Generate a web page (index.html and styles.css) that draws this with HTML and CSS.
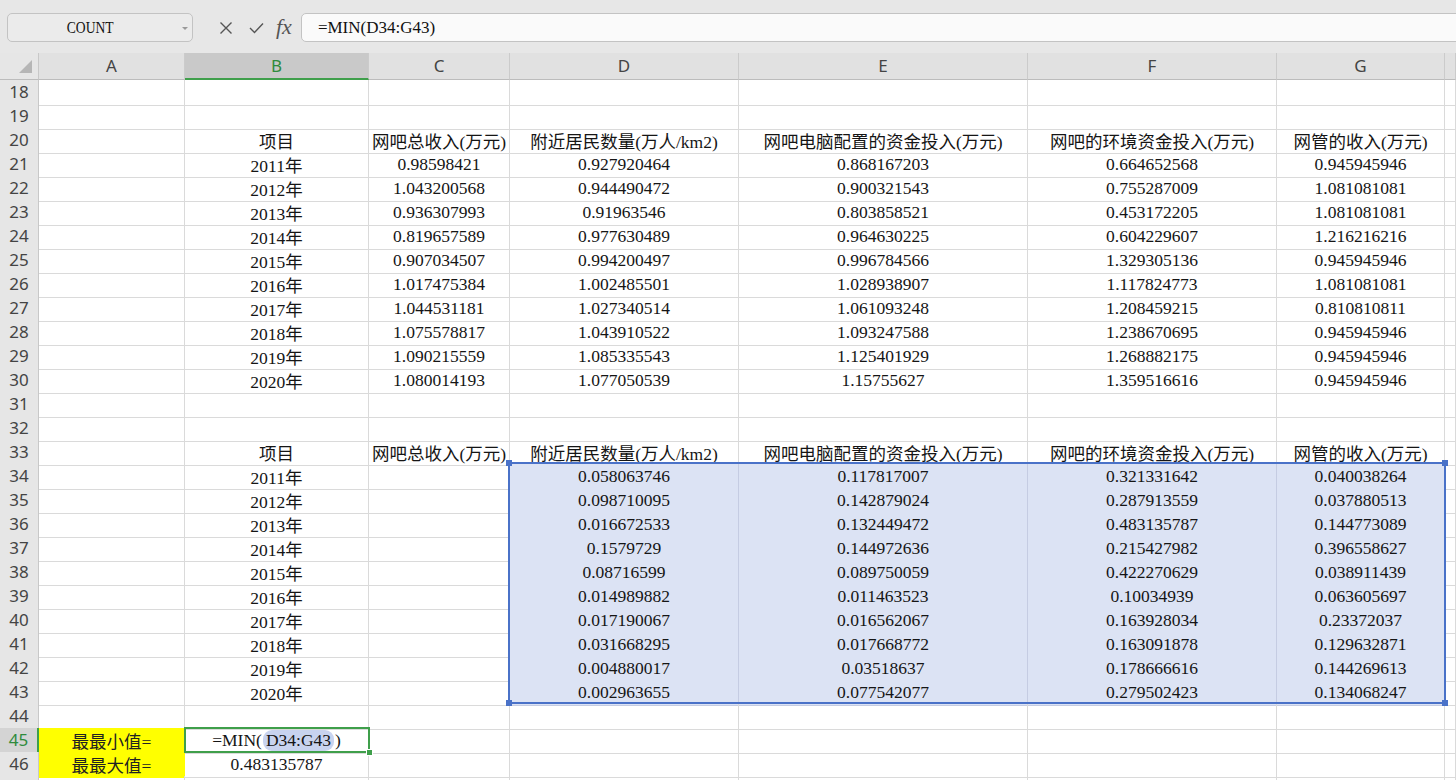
FILE: index.html
```html
<!DOCTYPE html>
<html>
<head>
<meta charset="utf-8">
<link rel="stylesheet" href="styles.css">
</head>
<body>
<div class="toolbar">
  <div class="namebox"><span class="namebox-text">COUNT</span><span class="caret"></span></div>
  <div class="icons">
    <svg class="ic" width="14" height="14" viewBox="0 0 14 14"><path d="M1.5 1.5 L12.5 12.5 M12.5 1.5 L1.5 12.5" stroke="#555" stroke-width="1.4" fill="none"/></svg>
    <svg class="ic ic-check" width="15" height="12" viewBox="0 0 15 12"><path d="M1 6 L5.5 10.5 L14 1.5" stroke="#555" stroke-width="1.4" fill="none"/></svg>
    <span class="fx">fx</span>
  </div>
  <div class="formula">=MIN(D34:G43)</div>
</div>
<div class="sheet">
  <div class="row hdr">
    <div class="c corner"><div class="tri"></div></div>
    <div class="c ch">A</div><div class="c ch act">B</div><div class="c ch">C</div><div class="c ch">D</div><div class="c ch">E</div><div class="c ch">F</div><div class="c ch">G</div><div class="c ch"></div>
  </div>
  <div class="row"><div class="c rh">18</div><div class="c"></div><div class="c"></div><div class="c"></div><div class="c"></div><div class="c"></div><div class="c"></div><div class="c"></div><div class="c"></div></div>
  <div class="row"><div class="c rh">19</div><div class="c"></div><div class="c"></div><div class="c"></div><div class="c"></div><div class="c"></div><div class="c"></div><div class="c"></div><div class="c"></div></div>
  <div class="row"><div class="c rh">20</div><div class="c"></div><div class="c">项目</div><div class="c">网吧总收入(万元)</div><div class="c">附近居民数量(万人/km2)</div><div class="c">网吧电脑配置的资金投入(万元)</div><div class="c">网吧的环境资金投入(万元)</div><div class="c">网管的收入(万元)</div><div class="c"></div></div>
  <div class="row"><div class="c rh">21</div><div class="c"></div><div class="c">2011年</div><div class="c">0.98598421</div><div class="c">0.927920464</div><div class="c">0.868167203</div><div class="c">0.664652568</div><div class="c">0.945945946</div><div class="c"></div></div>
  <div class="row"><div class="c rh">22</div><div class="c"></div><div class="c">2012年</div><div class="c">1.043200568</div><div class="c">0.944490472</div><div class="c">0.900321543</div><div class="c">0.755287009</div><div class="c">1.081081081</div><div class="c"></div></div>
  <div class="row"><div class="c rh">23</div><div class="c"></div><div class="c">2013年</div><div class="c">0.936307993</div><div class="c">0.91963546</div><div class="c">0.803858521</div><div class="c">0.453172205</div><div class="c">1.081081081</div><div class="c"></div></div>
  <div class="row"><div class="c rh">24</div><div class="c"></div><div class="c">2014年</div><div class="c">0.819657589</div><div class="c">0.977630489</div><div class="c">0.964630225</div><div class="c">0.604229607</div><div class="c">1.216216216</div><div class="c"></div></div>
  <div class="row"><div class="c rh">25</div><div class="c"></div><div class="c">2015年</div><div class="c">0.907034507</div><div class="c">0.994200497</div><div class="c">0.996784566</div><div class="c">1.329305136</div><div class="c">0.945945946</div><div class="c"></div></div>
  <div class="row"><div class="c rh">26</div><div class="c"></div><div class="c">2016年</div><div class="c">1.017475384</div><div class="c">1.002485501</div><div class="c">1.028938907</div><div class="c">1.117824773</div><div class="c">1.081081081</div><div class="c"></div></div>
  <div class="row"><div class="c rh">27</div><div class="c"></div><div class="c">2017年</div><div class="c">1.044531181</div><div class="c">1.027340514</div><div class="c">1.061093248</div><div class="c">1.208459215</div><div class="c">0.810810811</div><div class="c"></div></div>
  <div class="row"><div class="c rh">28</div><div class="c"></div><div class="c">2018年</div><div class="c">1.075578817</div><div class="c">1.043910522</div><div class="c">1.093247588</div><div class="c">1.238670695</div><div class="c">0.945945946</div><div class="c"></div></div>
  <div class="row"><div class="c rh">29</div><div class="c"></div><div class="c">2019年</div><div class="c">1.090215559</div><div class="c">1.085335543</div><div class="c">1.125401929</div><div class="c">1.268882175</div><div class="c">0.945945946</div><div class="c"></div></div>
  <div class="row"><div class="c rh">30</div><div class="c"></div><div class="c">2020年</div><div class="c">1.080014193</div><div class="c">1.077050539</div><div class="c">1.15755627</div><div class="c">1.359516616</div><div class="c">0.945945946</div><div class="c"></div></div>
  <div class="row"><div class="c rh">31</div><div class="c"></div><div class="c"></div><div class="c"></div><div class="c"></div><div class="c"></div><div class="c"></div><div class="c"></div><div class="c"></div></div>
  <div class="row"><div class="c rh">32</div><div class="c"></div><div class="c"></div><div class="c"></div><div class="c"></div><div class="c"></div><div class="c"></div><div class="c"></div><div class="c"></div></div>
  <div class="row"><div class="c rh">33</div><div class="c"></div><div class="c">项目</div><div class="c">网吧总收入(万元)</div><div class="c">附近居民数量(万人/km2)</div><div class="c">网吧电脑配置的资金投入(万元)</div><div class="c">网吧的环境资金投入(万元)</div><div class="c">网管的收入(万元)</div><div class="c"></div></div>
  <div class="row"><div class="c rh">34</div><div class="c"></div><div class="c">2011年</div><div class="c"></div><div class="c sel">0.058063746</div><div class="c sel">0.117817007</div><div class="c sel">0.321331642</div><div class="c sel">0.040038264</div><div class="c"></div></div>
  <div class="row"><div class="c rh">35</div><div class="c"></div><div class="c">2012年</div><div class="c"></div><div class="c sel">0.098710095</div><div class="c sel">0.142879024</div><div class="c sel">0.287913559</div><div class="c sel">0.037880513</div><div class="c"></div></div>
  <div class="row"><div class="c rh">36</div><div class="c"></div><div class="c">2013年</div><div class="c"></div><div class="c sel">0.016672533</div><div class="c sel">0.132449472</div><div class="c sel">0.483135787</div><div class="c sel">0.144773089</div><div class="c"></div></div>
  <div class="row"><div class="c rh">37</div><div class="c"></div><div class="c">2014年</div><div class="c"></div><div class="c sel">0.1579729</div><div class="c sel">0.144972636</div><div class="c sel">0.215427982</div><div class="c sel">0.396558627</div><div class="c"></div></div>
  <div class="row"><div class="c rh">38</div><div class="c"></div><div class="c">2015年</div><div class="c"></div><div class="c sel">0.08716599</div><div class="c sel">0.089750059</div><div class="c sel">0.422270629</div><div class="c sel">0.038911439</div><div class="c"></div></div>
  <div class="row"><div class="c rh">39</div><div class="c"></div><div class="c">2016年</div><div class="c"></div><div class="c sel">0.014989882</div><div class="c sel">0.011463523</div><div class="c sel">0.10034939</div><div class="c sel">0.063605697</div><div class="c"></div></div>
  <div class="row"><div class="c rh">40</div><div class="c"></div><div class="c">2017年</div><div class="c"></div><div class="c sel">0.017190067</div><div class="c sel">0.016562067</div><div class="c sel">0.163928034</div><div class="c sel">0.23372037</div><div class="c"></div></div>
  <div class="row"><div class="c rh">41</div><div class="c"></div><div class="c">2018年</div><div class="c"></div><div class="c sel">0.031668295</div><div class="c sel">0.017668772</div><div class="c sel">0.163091878</div><div class="c sel">0.129632871</div><div class="c"></div></div>
  <div class="row"><div class="c rh">42</div><div class="c"></div><div class="c">2019年</div><div class="c"></div><div class="c sel">0.004880017</div><div class="c sel">0.03518637</div><div class="c sel">0.178666616</div><div class="c sel">0.144269613</div><div class="c"></div></div>
  <div class="row"><div class="c rh">43</div><div class="c"></div><div class="c">2020年</div><div class="c"></div><div class="c sel">0.002963655</div><div class="c sel">0.077542077</div><div class="c sel">0.279502423</div><div class="c sel">0.134068247</div><div class="c"></div></div>
  <div class="row"><div class="c rh">44</div><div class="c"></div><div class="c"></div><div class="c"></div><div class="c"></div><div class="c"></div><div class="c"></div><div class="c"></div><div class="c"></div></div>
  <div class="row"><div class="c rh act">45</div><div class="c yel">最最小值=</div><div class="c">=MIN(<span class="ref">D34:G43</span>)</div><div class="c"></div><div class="c"></div><div class="c"></div><div class="c"></div><div class="c"></div><div class="c"></div></div>
  <div class="row"><div class="c rh">46</div><div class="c yel">最最大值=</div><div class="c">0.483135787</div><div class="c"></div><div class="c"></div><div class="c"></div><div class="c"></div><div class="c"></div><div class="c"></div></div>
  <div class="row"><div class="c rh"></div><div class="c"></div><div class="c"></div><div class="c"></div><div class="c"></div><div class="c"></div><div class="c"></div><div class="c"></div><div class="c"></div></div>

  <div class="range">
    <span class="hd tl"></span><span class="hd tr"></span><span class="hd bl"></span><span class="hd br"></span>
  </div>
  <div class="active"><span class="ahd"></span></div>
</div>
</body>
</html>
```
FILE: styles.css
```css
* { box-sizing: border-box; }
html, body { margin: 0; padding: 0; }
body {
  width: 1456px;
  height: 780px;
  overflow: hidden;
  background: #ffffff;
}

/* ---------- formula bar ---------- */
.toolbar {
  height: 53px;
  background: #e7e7e7;
  display: flex;
  align-items: flex-start;
  padding: 13px 0 0 7px;
}
.namebox {
  width: 186px;
  height: 29px;
  border: 1px solid #c3c3c3;
  border-radius: 5px;
  background: #ebebeb;
  display: flex;
  align-items: center;
}
.namebox-text {
  flex: 1;
  text-align: center;
  padding-right: 12px;
  font: 17px "Liberation Serif", serif;
  color: #111;
  transform: scaleX(0.8);
}
.caret {
  width: 0;
  height: 0;
  border-left: 3px solid transparent;
  border-right: 3px solid transparent;
  border-top: 3px solid #999;
  margin-right: 4px;
  margin-top: 1px;
}
.icons {
  display: flex;
  align-items: center;
  height: 29px;
  margin-left: 26px;
}
.ic-check { margin-left: 16px; }
.fx {
  margin-left: 12px;
  font: italic 22px "Liberation Serif", serif;
  color: #555;
  line-height: 29px;
  margin-top: -2px;
}
.formula {
  flex: 1;
  height: 29px;
  margin-left: 9px;
  margin-right: -8px;
  border: 1px solid #c3c3c3;
  border-radius: 5px;
  background: #fafafa;
  padding-left: 16px;
  display: flex;
  align-items: center;
  font: 17px "Liberation Serif", serif;
  color: #111;
}

/* ---------- sheet ---------- */
.sheet { position: relative; }
.row {
  display: grid;
  grid-template-columns: 39px 146px 184px 141px 229px 289px 249px 168px 1fr;
  height: 24px;
}
.row.hdr { height: 27px; }
.c {
  border-right: 1px solid #dadada;
  border-bottom: 1px solid #dadada;
  display: flex;
  align-items: center;
  justify-content: center;
  white-space: nowrap;
  font: 17.5px "Liberation Serif", "Noto Sans CJK SC", serif;
  color: #151515;
}
.corner {
  background: #e6e6e6;
  border-right: 1px solid #c8c8c8;
  border-bottom: 1px solid #bcbcbc;
  align-items: flex-end;
  justify-content: flex-end;
  padding: 0 6px 6px 0;
}
.tri {
  width: 13px;
  height: 13px;
  background: #b6b6b6;
  clip-path: polygon(100% 0, 100% 100%, 0 100%);
}
.ch {
  background: #e1e1e1;
  border-right: 1px solid #cbcbcb;
  border-bottom: 1px solid #bcbcbc;
  font: 17px "Noto Sans", sans-serif;
  color: #444;
  padding-bottom: 1px;
}
.ch.act {
  background: #c9c9c9;
  color: #2f8b3c;
  border-bottom: 2px solid #3f9f4b;
}
.rh {
  background: #e6e6e6;
  border-right: 1px solid #c8c8c8;
  border-bottom: 1px solid #d2d2d2;
  font: 17px "Noto Sans", sans-serif;
  color: #444;
  padding-bottom: 2px;
}
.rh.act {
  background: #d4d4d4;
  color: #2f8b3c;
  border-right: 2px solid #3f9f4b;
}
.sel {
  background: #dce3f4;
  border-right-color: #c5cce2;
  border-bottom-color: #c5cce2;
}
.yel {
  background: #ffff00;
  border-right-color: #ffff00;
  border-bottom-color: #ffff00;
  color: #222;
}
.ref {
  background: #c8d3ef;
  border-radius: 9px;
  padding: 0 3px;
  margin: 0 1px;
}

/* ---------- selection overlays ---------- */
.range {
  position: absolute;
  left: 508px;
  top: 409px;
  width: 938px;
  height: 242px;
  border: 2px solid #4a72c8;
}
.hd {
  position: absolute;
  width: 6px;
  height: 6px;
  background: #4a72c8;
}
.tl { left: -4px; top: -4px; }
.tr { right: -4px; top: -4px; }
.bl { left: -4px; bottom: -4px; }
.br { right: -4px; bottom: -4px; }
.active {
  position: absolute;
  left: 184px;
  top: 674px;
  width: 186px;
  height: 26px;
  border: 2px solid #3f9f4b;
}
.ahd {
  position: absolute;
  right: -5px;
  bottom: -5px;
  width: 7px;
  height: 7px;
  background: #3f9f4b;
  border: 1px solid #fff;
}
```
